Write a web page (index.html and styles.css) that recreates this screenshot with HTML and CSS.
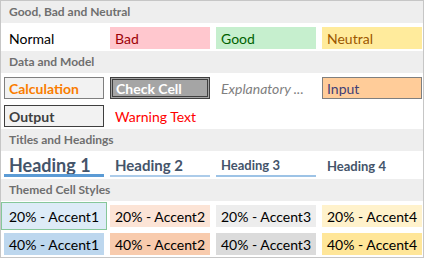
FILE: index.html
```html
<!DOCTYPE html>
<html lang="en">
<head>
    <meta charset="UTF-8">
    <title>Cell Styles</title>
    <link rel="stylesheet" href="styles.css">
</head>
<body>
    <div class="gallery">
        <div class="group-title">Good, Bad and Neutral</div>
        <div class="group-body">
            <div class="cell normal">Normal</div>
            <div class="cell bad">Bad</div>
            <div class="cell good">Good</div>
            <div class="cell neutral">Neutral</div>
        </div>

        <div class="group-title">Data and Model</div>
        <div class="group-body">
            <div class="cell calculation">Calculation</div>
            <div class="cell check">Check Cell</div>
            <div class="cell explanatory">Explanatory ...</div>
            <div class="cell input">Input</div>
            <div class="cell output">Output</div>
            <div class="cell warning">Warning Text</div>
        </div>

        <div class="group-title">Titles and Headings</div>
        <div class="group-body">
            <div class="cell heading1">Heading 1</div>
            <div class="cell heading2">Heading 2</div>
            <div class="cell heading3">Heading 3</div>
            <div class="cell heading4">Heading 4</div>
        </div>

        <div class="group-title">Themed Cell Styles</div>
        <div class="group-body">
            <div class="cell accent1-20 hovered">20% - Accent1</div>
            <div class="cell accent2-20">20% - Accent2</div>
            <div class="cell accent3-20">20% - Accent3</div>
            <div class="cell accent4-20">20% - Accent4</div>
            <div class="cell accent1-40">40% - Accent1</div>
            <div class="cell accent2-40">40% - Accent2</div>
            <div class="cell accent3-40">40% - Accent3</div>
            <div class="cell accent4-40">40% - Accent4</div>
        </div>
    </div>
</body>
</html>
```

FILE: styles.css
```css
body {
    margin: 0;
    padding: 0;
    background-color: #fff;
    font-family: Lato, "Open Sans", sans-serif;
}
.gallery {
    width: 424px;
    height: 258px;
    box-sizing: border-box;
    border: 1px solid #c6c6c6;
    background-color: #fff;
    overflow: hidden;
}
.group-title {
    height: 22px;
    line-height: 22px;
    padding-left: 8px;
    background-color: #eeeeee;
    color: #6f6f6f;
    font-size: 12px;
    font-weight: bold;
}
.group-body {
    display: grid;
    grid-template-columns: repeat(4, 100px);
    gap: 6px;
    padding: 4px 0 2px 3px;
}
.cell {
    height: 22px;
    box-sizing: border-box;
    padding: 0 5px;
    display: flex;
    align-items: center;
    font-size: 14px;
    color: #000;
    white-space: nowrap;
    overflow: hidden;
}
.bad {
    background-color: #ffc7ce;
    color: #9c0006;
}
.good {
    background-color: #c6efce;
    color: #006100;
}
.neutral {
    background-color: #ffeb9c;
    color: #9c5700;
}
.calculation {
    background-color: #f2f2f2;
    border: 1px solid #7f7f7f;
    padding-left: 4px;
    color: #fa7d00;
    font-weight: bold;
}
.check {
    background-color: #a5a5a5;
    border: 3px double #3f3f3f;
    padding-left: 3px;
    color: #fff;
    font-weight: bold;
}
.explanatory {
    color: #7f7f7f;
    font-style: italic;
}
.input {
    background-color: #ffcc99;
    border: 1px solid #7f7f7f;
    padding-left: 4px;
    color: #3f3f76;
}
.output {
    background-color: #f2f2f2;
    border: 1px solid #3f3f3f;
    padding-left: 4px;
    color: #3f3f3f;
    font-weight: bold;
}
.warning {
    color: #ff0000;
}
.heading1, .heading2, .heading3, .heading4 {
    color: #44546a;
    font-weight: bold;
}
.heading1 {
    font-size: 18px;
    border-bottom: 3px solid #5b9bd5;
}
.heading2 {
    font-size: 15px;
    border-bottom: 2px solid #acccea;
}
.heading3 {
    font-size: 13px;
    border-bottom: 2px solid #9dc3e6;
}
.heading4 {
    font-size: 13px;
}
.accent1-20 { background-color: #ddebf7; }
.accent2-20 { background-color: #fce4d6; }
.accent3-20 { background-color: #ededed; }
.accent4-20 { background-color: #fff2cc; }
.accent1-40 { background-color: #bdd7ee; }
.accent2-40 { background-color: #f8cbad; }
.accent3-40 { background-color: #dbdbdb; }
.accent4-40 { background-color: #ffe699; }
.hovered {
    overflow: visible;
    box-shadow: 0 0 0 2px #ddebf7, 0 0 0 3px #86c79a;
}
```
